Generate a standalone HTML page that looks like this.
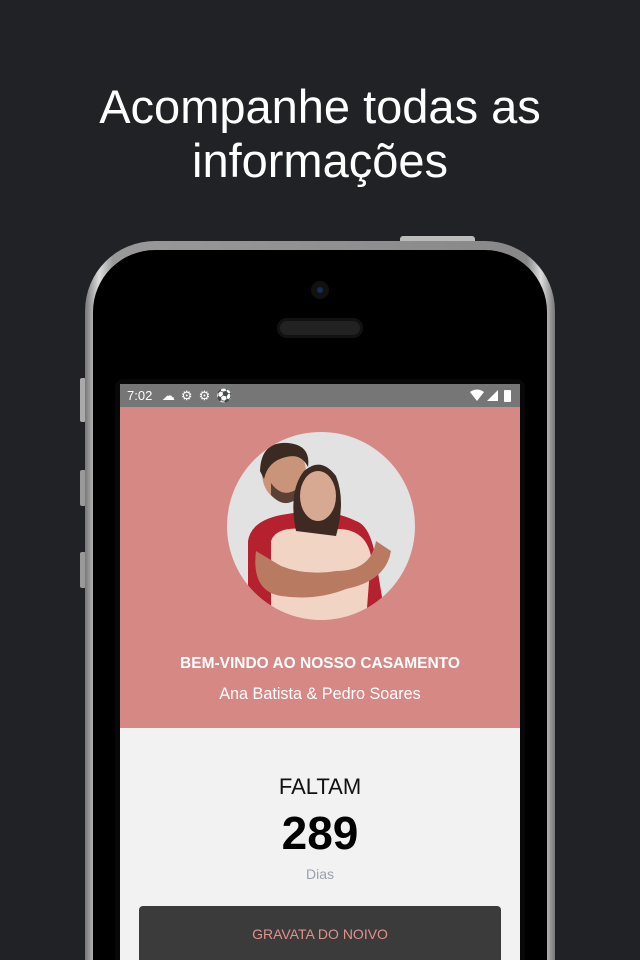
<!DOCTYPE html>
<html style="overflow:hidden;height:960px"><head><meta charset="utf-8"><style>
body{margin:0;width:640px;height:960px;background:#202226;overflow:hidden;position:relative;font-family:"Liberation Sans",sans-serif}
.t{position:absolute;top:80px;left:0;width:640px;text-align:center;color:#fff;font-size:47px;line-height:54px}
.ph{position:absolute;left:85px;top:241px;width:470px;height:719px;border-radius:70px 70px 0 0;background:linear-gradient(90deg,#777,#ddd 3%,#999 6%,#888 94%,#ddd 97%,#777)}
.in{position:absolute;left:93px;top:250px;width:454px;height:710px;border-radius:62px 62px 0 0;background:#000}
.scr{position:absolute;left:120px;top:384px;width:400px;height:576px;background:#f2f2f2;overflow:hidden}
.sb{height:23px;background:#767676;color:#fff;font-size:13px;line-height:23px;padding-left:7px;position:relative}
.pk{height:321px;background:#d68884;position:relative}
</style></head><body>
<div class="t">Acompanhe todas as<br>informações</div>
<div style="position:absolute;left:400px;top:236px;width:75px;height:8px;background:#bbb;border-radius:3px"></div>
<div style="position:absolute;left:80px;top:378px;width:6px;height:44px;background:#aaa;border-radius:2px"></div>
<div style="position:absolute;left:80px;top:470px;width:6px;height:36px;background:#999;border-radius:2px"></div>
<div style="position:absolute;left:80px;top:552px;width:6px;height:36px;background:#999;border-radius:2px"></div>
<div class="ph"></div><div class="in"></div>
<div style="position:absolute;left:311px;top:281px;width:18px;height:18px;border-radius:50%;background:#111"><div style="margin:6px;width:6px;height:6px;border-radius:50%;background:#1a2a55"></div></div>
<div style="position:absolute;left:277px;top:318px;width:86px;height:20px;border-radius:10px;background:#222;box-shadow:inset 0 0 0 3px #111"></div>
<div style="position:absolute;left:115px;top:379px;width:410px;height:581px;border-radius:8px 8px 0 0;background:#080808"></div>
<div class="scr">
<div class="sb">7:02 <span style="margin-left:6px;letter-spacing:6px">☁⚙⚙⚽</span>
<svg style="position:absolute;right:8px;top:5px" width="42" height="13"><path d="M0 3Q7-2 14 3L7 12Z" fill="#fff"/><path d="M28 1V12H17Z" fill="#fff"/><rect x="34" y="1" width="7" height="12" rx="1" fill="#fff"/></svg></div>
<div class="pk">
<svg style="position:absolute;left:106px;top:24px" width="190" height="190" viewBox="0 0 190 190">
<defs><clipPath id="c"><circle cx="95" cy="95" r="94"/></clipPath></defs>
<circle cx="95" cy="95" r="94" fill="#e2e2e2"/>
<g clip-path="url(#c)">
<path d="M22 190V110Q25 90 55 84L80 80Q110 80 130 90Q145 95 150 130L160 190Z" fill="#b5212e"/>
<ellipse cx="58" cy="42" rx="22" ry="28" fill="#c99479"/>
<path d="M34 40Q35 10 62 12Q85 14 82 36Q75 22 60 26Q42 30 38 48Z" fill="#3a2a22"/>
<path d="M45 52Q58 70 75 55L70 68Q58 78 45 64Z" fill="#5b4035"/>
<path d="M45 190V110Q50 95 80 98H115Q140 100 145 125L140 190Z" fill="#f2d4c4"/>
<path d="M70 100Q62 60 78 40Q95 25 110 45Q120 70 110 105Z" fill="#3e2a22"/>
<ellipse cx="92" cy="65" rx="18" ry="25" fill="#d7a892"/>
<path d="M30 120Q25 160 55 165Q90 170 120 158Q160 150 165 120L150 110Q145 140 110 140Q80 145 55 135Z" fill="#b97a62"/>
</g></svg>
<div style="position:absolute;top:248px;width:400px;text-align:center;color:#fff;font-weight:bold;font-size:15.5px">BEM-VINDO AO NOSSO CASAMENTO</div>
<div style="position:absolute;top:278px;width:400px;text-align:center;color:#fff;font-size:16.2px">Ana Batista &amp; Pedro Soares</div>
</div>
<div style="position:absolute;top:390px;width:400px;text-align:center;font-size:22px;color:#111">FALTAM</div>
<div style="position:absolute;top:422px;width:400px;text-align:center;font-size:46px;font-weight:bold;color:#000">289</div>
<div style="position:absolute;top:482px;width:400px;text-align:center;font-size:14px;color:#9aa0aa">Dias</div>
<div style="position:absolute;left:19px;top:522px;width:362px;height:60px;background:#3b3b3b;border-radius:4px;color:#e0918b;font-size:14px;text-align:center;line-height:56px">GRAVATA DO NOIVO</div>
</div>
</body></html>
